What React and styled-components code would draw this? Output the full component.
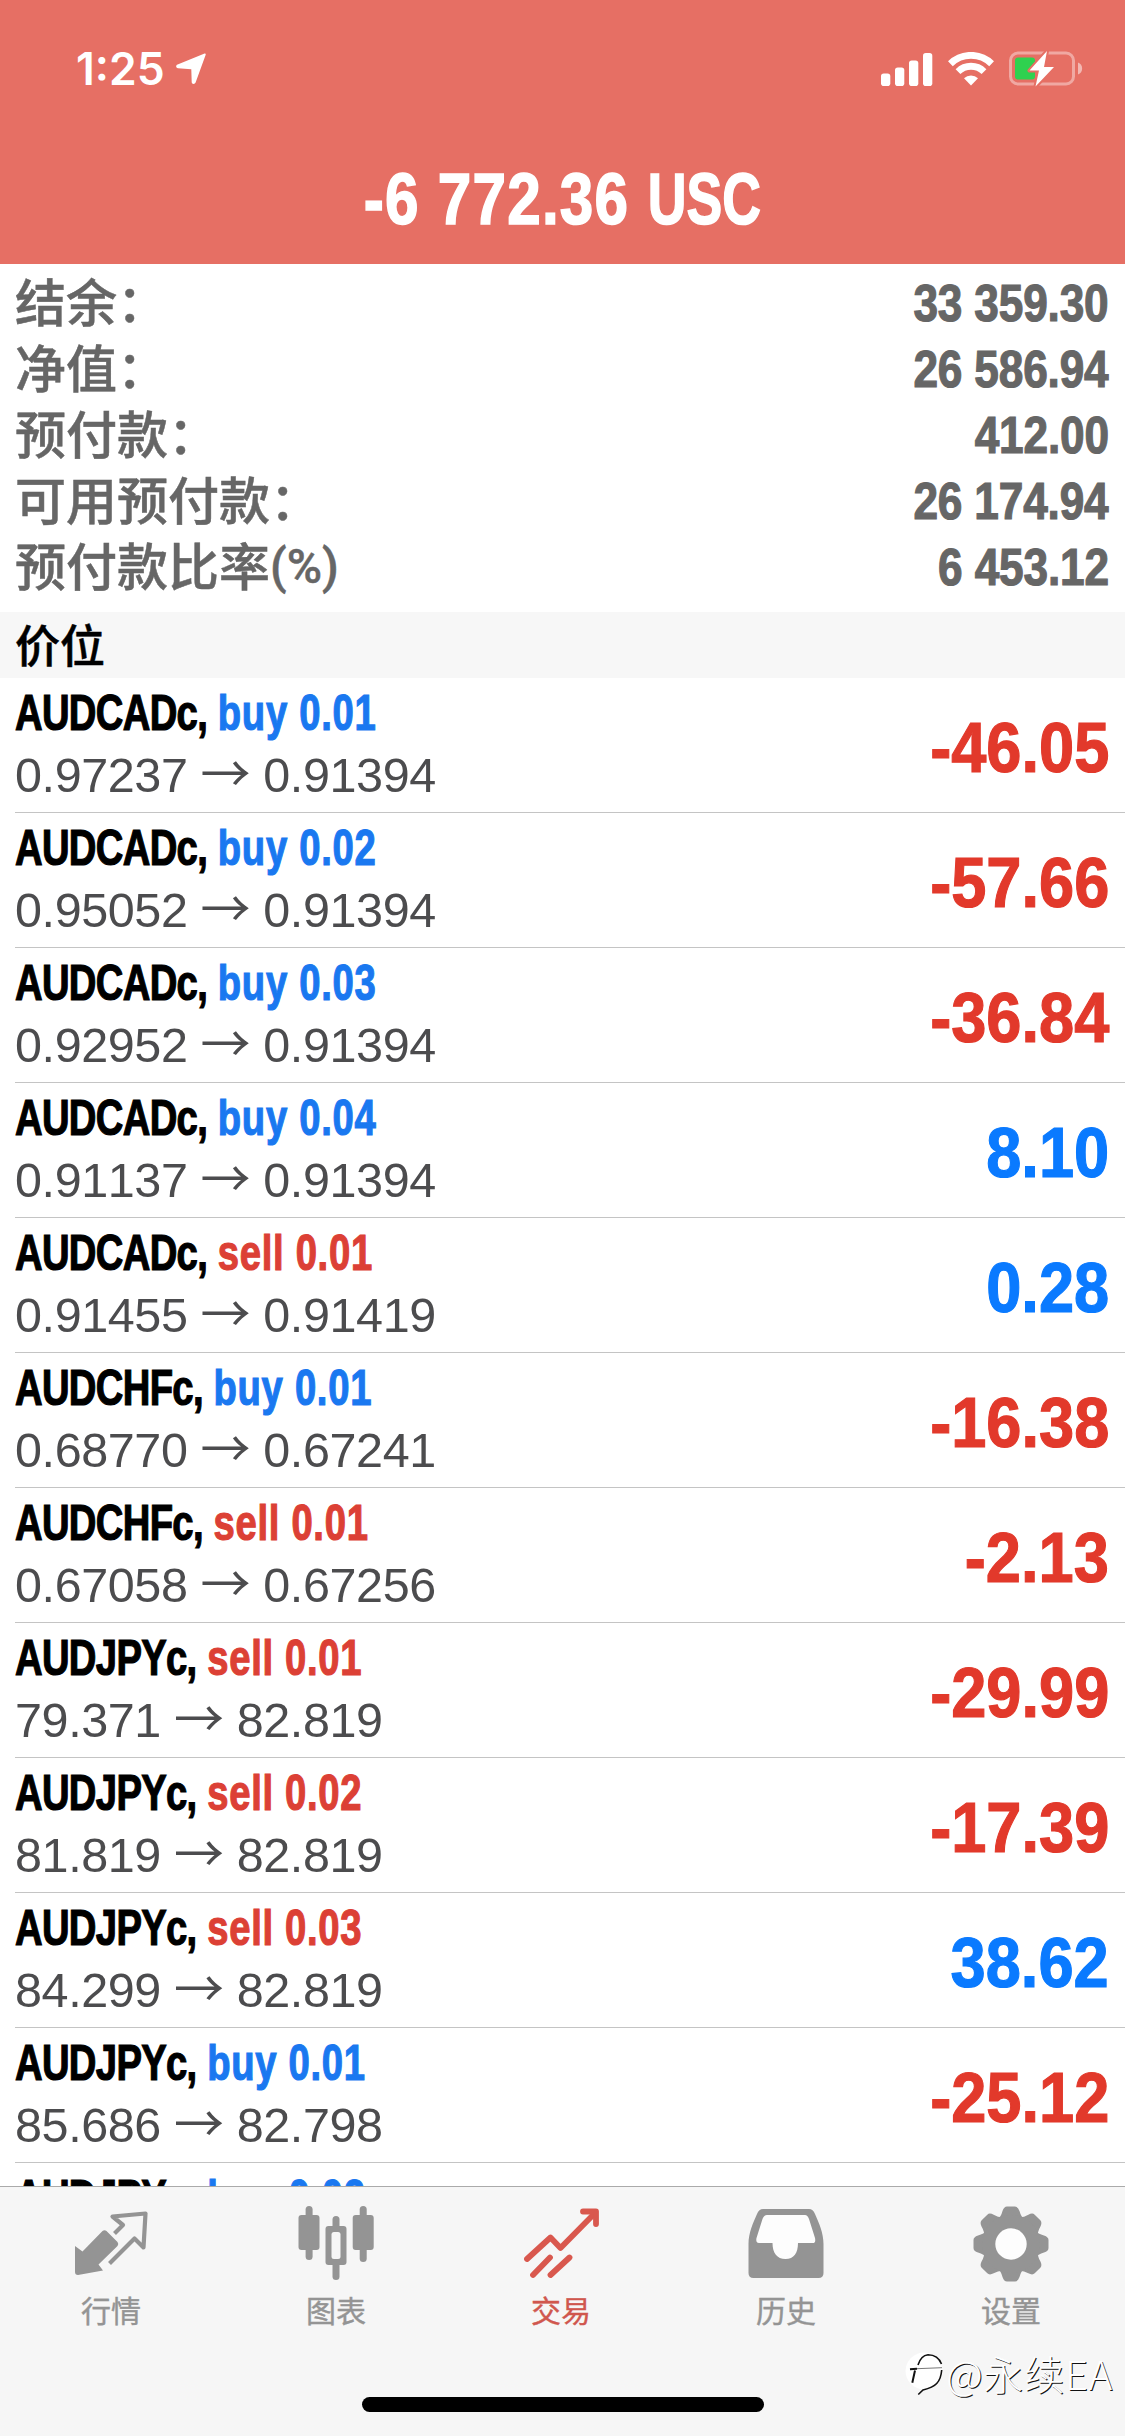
import React from 'react'
import styled, { createGlobalStyle } from 'styled-components';

const GlobalStyle = createGlobalStyle`
    body {
        margin: 0;
        background-color: #ffffff;
    }
`

const summary = [
    { label: '结余：', value: '33 359.30' },
    { label: '净值：', value: '26 586.94' },
    { label: '预付款：', value: '412.00' },
    { label: '可用预付款：', value: '26 174.94' },
    { label: '预付款比率', suffix: '(%)', value: '6 453.12' },
]

const positions = [
    { symbol: 'AUDCADc', side: 'buy', volume: '0.01', open: '0.97237', current: '0.91394', profit: '-46.05' },
    { symbol: 'AUDCADc', side: 'buy', volume: '0.02', open: '0.95052', current: '0.91394', profit: '-57.66' },
    { symbol: 'AUDCADc', side: 'buy', volume: '0.03', open: '0.92952', current: '0.91394', profit: '-36.84' },
    { symbol: 'AUDCADc', side: 'buy', volume: '0.04', open: '0.91137', current: '0.91394', profit: '8.10' },
    { symbol: 'AUDCADc', side: 'sell', volume: '0.01', open: '0.91455', current: '0.91419', profit: '0.28' },
    { symbol: 'AUDCHFc', side: 'buy', volume: '0.01', open: '0.68770', current: '0.67241', profit: '-16.38' },
    { symbol: 'AUDCHFc', side: 'sell', volume: '0.01', open: '0.67058', current: '0.67256', profit: '-2.13' },
    { symbol: 'AUDJPYc', side: 'sell', volume: '0.01', open: '79.371', current: '82.819', profit: '-29.99' },
    { symbol: 'AUDJPYc', side: 'sell', volume: '0.02', open: '81.819', current: '82.819', profit: '-17.39' },
    { symbol: 'AUDJPYc', side: 'sell', volume: '0.03', open: '84.299', current: '82.819', profit: '38.62' },
    { symbol: 'AUDJPYc', side: 'buy', volume: '0.01', open: '85.686', current: '82.798', profit: '-25.12' },
    { symbol: 'AUDJPYc', side: 'buy', volume: '0.02' },
]

const LocationIcon = () => (
    <svg width="30" height="32" viewBox="0 0 30 32" fill="#fff">
        <path d="M28.6 .6 C29.6 .3 30 1 29.6 2 L19.6 29.6 C18.8 31.6 15.8 31.5 15.7 29 L15.3 16.2 L2 15.3 C-.3 15 -.5 12.2 1.6 11.4 Z" />
    </svg>
)

const SignalIcon = () => (
    <svg width="52" height="33" viewBox="0 0 52 33" fill="#fff">
        <rect x="0" y="20.500" width="9.300" height="12.500" rx="2.800" />
        <rect x="14" y="14.500" width="9.300" height="18.500" rx="2.800" />
        <rect x="28" y="7.500" width="9.300" height="25.500" rx="2.800" />
        <rect x="42" y="0" width="9.300" height="33" rx="2.800" />
    </svg>
)

const WifiIcon = () => (
    <svg width="46" height="34" viewBox="0 0 46 34" fill="none" stroke="#fff" strokeWidth="6.800">
        <path d="M2.400 11.700 A29.500 29.500 0 0 1 43.600 11.700" />
        <path d="M10 19.600 A18.500 18.500 0 0 1 36 19.600" />
        <path d="M16 26.300 A10 10 0 0 1 30 26.300 L23 33.500 Z" fill="#fff" stroke="none" />
    </svg>
)

const BatteryIcon = () => (
    <svg width="76" height="38" viewBox="0 0 76 38">
        <rect x="1.500" y="3" width="63" height="31" rx="7.500" fill="none" stroke="#fff" strokeOpacity=".4" strokeWidth="3" />
        <path d="M69 12.500 C74.500 14 74.500 23 69 24.500 Z" fill="#fff" fillOpacity=".5" />
        <rect x="6" y="7.500" width="20" height="22" rx="3" fill="#2fd14f" />
        <path d="M38 1 L20.500 20.500 H30 L26.500 36.500 L45 17 H35 Z" fill="#fff" stroke="#e66f64" strokeWidth="4" paintOrder="stroke" strokeLinejoin="round" />
    </svg>
)

const QuotesIcon = () => (
    <svg width="76" height="76" viewBox="0 0 76 76" fill="#949494">
        <path d="M2 40 L9.500 45.500 L29.500 25 Q31.500 23.500 33.500 25 L44.500 36 Q46 38 44.500 40 L25.500 58.500 L30 64.500 L5 69 Q2 69 2 66 Z" />
        <path d="M41.500 27.500 L50 19 L39.500 10.500 L72.500 7.500 L70.500 41.500 L61.500 32.500 L36.500 57.500" fill="none" stroke="#949494" strokeWidth="4.200" strokeLinejoin="round" />
    </svg>
)

const ChartsIcon = () => (
    <svg width="76" height="76" viewBox="0 0 76 76" fill="#949494">
        <rect x="7.600" y="0" width="7" height="54" rx="3.500" />
        <rect x="0.500" y="9" width="21" height="35" rx="3" />
        <rect x="34.500" y="10" width="7" height="64" rx="3.500" />
        <rect x="27.500" y="20" width="21" height="39" rx="3" />
        <rect x="33.500" y="26" width="9" height="27" rx="2.500" fill="#f6f6f6" />
        <rect x="61.700" y="0" width="7" height="56" rx="3.500" />
        <rect x="54.700" y="9" width="21" height="35" rx="3" />
    </svg>
)

const TradeIcon = () => (
    <svg width="76" height="76" viewBox="0 0 76 76" fill="none" stroke="#d9584e" strokeWidth="5.800" strokeLinecap="round" strokeLinejoin="round">
        <path d="M4 53 L27.500 31.500 L37.500 42 L72 7" />
        <path d="M60 5.500 H73 V18" />
        <path d="M10 69 L27 51.500 M27.500 69 L46.500 51.500" />
    </svg>
)

const HistoryIcon = () => (
    <svg width="76" height="76" viewBox="0 0 76 76" fill="#949494">
        <path d="M15 3 H61 Q65 3 67 8 C71 17 75.500 27 75.500 38 V67 Q75.500 72 70.500 72 H5.500 Q.5 72 .5 67 V38 C.5 27 5 17 9 8 Q11 3 15 3 Z" />
        <path fill="#fdfdfd" d="M19 9 Q16 9 14.500 13 L8.500 32 Q7.500 37 11 37 H24.500 C24.500 47 29 53 37.500 53 C46 53 50 47 50 37 H65 Q68 37 67 32 L61 13 Q59.500 9 57 9 Z" />
    </svg>
)

const teeth = [0, 45, 90, 135, 180, 225, 270, 315]

const SettingsIcon = () => (
    <svg width="76" height="76" viewBox="0 0 76 76" fill="#949494">
        {teeth.map((angle) => (
            <path key={angle} transform={`rotate(${angle} 38 38)`} d="M24 14 Q28 11 29.500 5 Q31 .5 34 .5 H42 Q45 .5 46.500 5 Q48 11 52 14 Z" />
        ))}
        <circle cx="38" cy="38" r="29" />
        <circle cx="38" cy="38" r="15.700" fill="#fdfdfd" />
    </svg>
)

const WatermarkLogo = () => (
    <svg width="38" height="46" viewBox="0 0 38 46" fill="none">
        <circle cx="19" cy="21" r="18.500" fill="#fff" />
        <path d="M5 19.300 L12 18.700 M10 20.500 L7.300 32.700" stroke="#111" strokeWidth="2" />
        <path d="M12 18.700 L37 17.700" stroke="#555" strokeWidth=".8" />
        <path d="M13 15 Q16 5.500 23 4.800 Q33 5 36.500 14 M36.700 20 Q36 29 31.700 33.500 Q28 37.500 18 40 L13.300 44.500" stroke="#111" strokeWidth="1.600" />
    </svg>
)

const tabs = [
    { label: '行情', icon: QuotesIcon },
    { label: '图表', icon: ChartsIcon },
    { label: '交易', icon: TradeIcon, active: true },
    { label: '历史', icon: HistoryIcon },
    { label: '设置', icon: SettingsIcon },
]

const PositionRow = (props) => (
    <Row>
        <div>
            <SymbolLine>
                <Symbol>{props.symbol},</Symbol>{' '}
                <Deal $color={props.side === 'buy' ? '#1a78f0' : '#dc4035'}>
                    {props.side} {props.volume}
                </Deal>
            </SymbolLine>
            {props.open && (
                <Prices>
                    {props.open} <Arrow>→</Arrow> {props.current}
                </Prices>
            )}
        </div>
        {props.profit && (
            <Profit $color={props.profit.startsWith('-') ? '#e2392b' : '#0a7aff'}>{props.profit}</Profit>
        )}
    </Row>
)

const App = () => (
    <Screen>
        <GlobalStyle />
        <Header>
            <StatusBar>
                <Clock>1:25 <LocationIcon /></Clock>
                <StatusIcons>
                    <SignalIcon />
                    <WifiIcon />
                    <BatteryIcon />
                </StatusIcons>
            </StatusBar>
            <Total>-6 772.36 <Currency>USC</Currency></Total>
        </Header>
        <Summary>
            {summary.map((item) => (
                <SummaryRow key={item.label}>
                    <SummaryLabel>
                        {item.label}
                        {item.suffix && <Suffix>{item.suffix}</Suffix>}
                    </SummaryLabel>
                    <SummaryValue>{item.value}</SummaryValue>
                </SummaryRow>
            ))}
        </Summary>
        <SectionTitle>价位</SectionTitle>
        <List>
            {positions.map((item, index) => (
                <PositionRow key={index} {...item} />
            ))}
        </List>
        <Footer>
            <TabBar>
                {tabs.map((tab) => (
                    <Tab key={tab.label} $active={tab.active}>
                        <tab.icon />
                        {tab.label}
                    </Tab>
                ))}
            </TabBar>
            <HomeIndicator />
            <Watermark>
                <WatermarkLogo />
                @永续EA
            </Watermark>
        </Footer>
    </Screen>
)

const Screen = styled.div`
    width: 1125px;
    height: 2436px;
    display: flex;
    flex-direction: column;
    overflow: hidden;
    background-color: #ffffff;
    font-family: "Liberation Sans", "Noto Sans CJK SC", sans-serif;
    font-kerning: none;
    white-space: nowrap;
`
const Header = styled.header`
    height: 264px;
    flex: none;
    display: flex;
    flex-direction: column;
    background-color: #e66f64;
    color: #ffffff;
`
const StatusBar = styled.div`
    height: 138px;
    display: flex;
    align-items: center;
    justify-content: space-between;
    padding: 0 40px 0 76px;
`
const Clock = styled.div`
    display: flex;
    align-items: center;
    gap: 11px;
    font-family: Inter, sans-serif;
    font-size: 44.5px;
    font-weight: 600;
`
const StatusIcons = styled.div`
    display: flex;
    align-items: center;
    gap: 15px;
`
const Total = styled.h1`
    margin: 0;
    font-size: 73px;
    line-height: 122px;
    font-weight: bold;
    letter-spacing: 1.5px;
    text-align: center;
    transform: scaleX(0.825);
    -webkit-text-stroke: 1.6px #ffffff;
`
const Currency = styled.span`
    display: inline-block;
    margin-left: -16px;
    letter-spacing: 0;
    transform: scaleX(0.89);
    transform-origin: right;
`
const Summary = styled.section`
    height: 348px;
    flex: none;
    box-sizing: border-box;
    padding: 6px 16px 0 15px;
    color: #666666;
`
const SummaryRow = styled.div`
    height: 66px;
    display: flex;
    align-items: flex-start;
    justify-content: space-between;
`
const SummaryLabel = styled.span`
    margin-top: -3px;
    font-family: "Noto Sans CJK SC", sans-serif;
    font-size: 51px;
    line-height: 66px;
    font-weight: 500;
    -webkit-text-stroke: 0.5px #666666;
`
const Suffix = styled.span`
    display: inline-block;
    font-family: Roboto, sans-serif;
    font-size: 48px;
    line-height: 1;
    transform: translateY(-3px);
`
const SummaryValue = styled.span`
    font-size: 52px;
    line-height: 66px;
    font-weight: bold;
    letter-spacing: -0.2px;
    transform: scaleX(0.85);
    transform-origin: right;
    -webkit-text-stroke: 1.2px #666666;
`
const SectionTitle = styled.h2`
    margin: 0;
    height: 66px;
    flex: none;
    padding-left: 15px;
    background-color: #f7f7f7;
    font-family: "Noto Sans CJK SC", sans-serif;
    font-size: 45px;
    line-height: 63px;
    font-weight: 500;
    color: #000000;
    -webkit-text-stroke: 0.5px #000000;
`
const List = styled.div`
    flex: 1;
    min-height: 0;
    overflow: hidden;
    padding-left: 15px;
`
const Row = styled.div`
    height: 135px;
    box-sizing: border-box;
    display: flex;
    justify-content: space-between;
    padding: 4px 16px 0 0;
    border-bottom: 1px solid #c4c4c4;
`
const SymbolLine = styled.div`
    font-size: 50px;
    line-height: 62px;
    font-weight: bold;
    transform: scaleX(0.765);
    transform-origin: left;
`
const Symbol = styled.span`
    color: #000000;
    letter-spacing: -0.9px;
    -webkit-text-stroke: 1.2px #000000;
`
const Deal = styled.span`
    color: ${props => props.$color};
    letter-spacing: 0.9px;
    -webkit-text-stroke: 1.2px ${props => props.$color};
`
const Prices = styled.div`
    font-size: 48.5px;
    line-height: 62px;
    letter-spacing: -0.4px;
    color: #4c4c4e;
`
const Arrow = styled.span`
    font-family: "Noto Sans CJK SC", sans-serif;
    font-size: 50px;
    line-height: 1;
`
const Profit = styled.div`
    font-size: 71px;
    line-height: 131px;
    font-weight: bold;
    color: ${props => props.$color};
    transform: scaleX(0.89);
    transform-origin: right;
    -webkit-text-stroke: 1.2px ${props => props.$color};
`
const Footer = styled.footer`
    position: relative;
    height: 250px;
    flex: none;
    box-sizing: border-box;
    display: flex;
    flex-direction: column;
    align-items: center;
    border-top: 1px solid #aaaaaa;
    background-color: #f6f6f6;
`
const TabBar = styled.nav`
    width: 1125px;
    height: 210px;
    display: flex;
    margin-right: 3px;
`
const Tab = styled.div`
    flex: 1;
    display: flex;
    flex-direction: column;
    align-items: center;
    padding-top: 19px;
    font-family: "Noto Sans CJK SC", sans-serif;
    font-size: 30px;
    line-height: 54px;
    color: ${props => props.$active ? '#d0574e' : '#949494'};
    -webkit-text-stroke: 0.4px ${props => props.$active ? '#d0574e' : '#949494'};
`
const HomeIndicator = styled.div`
    width: 402px;
    height: 15px;
    border-radius: 8px;
    background-color: #000000;
`
const Watermark = styled.div`
    position: absolute;
    right: 12px;
    bottom: 38px;
    display: flex;
    align-items: center;
    gap: 3px;
    font-family: "Noto Sans CJK SC", sans-serif;
    font-size: 40px;
    line-height: 40px;
    height: 46px;
    padding-bottom: 2px;
    letter-spacing: 0.8px;
    font-weight: 300;
    color: #ffffff;
    text-shadow: 1px 1px 0 #111111;
`
export default App
